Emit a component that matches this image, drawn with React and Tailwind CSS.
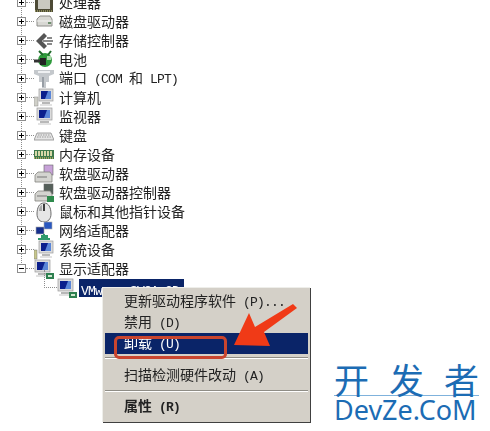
import React from 'react';

const cjk = { fontFamily: '"Noto Sans CJK SC", "Liberation Sans", sans-serif' };

const Cpu = () => (
  <svg viewBox="0 0 20 20" className="w-5 h-5">
    <rect x="1" y="1" width="18" height="18" fill="#4d4a36" />
    <rect x="4" y="3" width="12" height="13" fill="#c9c8c0" />
    <path d="M1 18h18" stroke="#8a8a5a" strokeWidth="2" strokeDasharray="1 1" />
  </svg>
);
const Disk = () => (
  <svg viewBox="0 0 20 20" className="w-5 h-5">
    <path d="M3 7 L6 4 H16 L18 7 V14 H3 Z" fill="#d8d8d4" stroke="#8e8e8a" />
    <path d="M3 9 H18" stroke="#f2f2f0" />
    <rect x="14" y="10" width="3" height="2" fill="#6f8f6f" />
  </svg>
);
const Storage = () => (
  <svg viewBox="0 0 20 20" className="w-5 h-5">
    <path d="M10 2 L2 10 L10 18 L13 15 L8 10 L13 5 Z" fill="#555" />
    <path d="M9 10 H19 M13 7 H18 M13 13 H18" stroke="#8a8a8a" strokeWidth="2" />
  </svg>
);
const Battery = () => (
  <svg viewBox="0 0 20 20" className="w-5 h-5">
    <circle cx="11" cy="10" r="7" fill="#2f9a3c" />
    <path d="M5 1 L9 5 M17 1 L14 5" stroke="#1f6a2a" strokeWidth="2" />
    <path d="M0 11 H7" stroke="#333" strokeWidth="3" />
    <rect x="6" y="8" width="6" height="7" fill="#222" />
    <rect x="13" y="6" width="4" height="4" fill="#a8d8a8" />
  </svg>
);
const Port = () => (
  <svg viewBox="0 0 20 20" className="w-5 h-5">
    <path d="M0 1 H20 V5 L15 7 V13 H12 V19 H8 V13 H5 V7 L0 5 Z" fill="#c4c8cc" />
    <path d="M4 3 H16" stroke="#eef0f2" strokeWidth="2" />
    <path d="M9 8 V18" stroke="#8a9098" strokeWidth="1.5" />
  </svg>
);
const Screen = ({ x = 3, w = 15 }) => (
  <>
    <rect x={x} y="1" width={w} height="12" fill="#dcdcdc" stroke="#9a9a9a" strokeWidth="0.7" />
    <rect x={x + 2} y="3" width={w - 4} height="8" fill="#5a86d8" />
    <path d={`M${x + 2} 3 h${w - 7} l-3 8 h-${w - 10} z`} fill="#0b1f8c" />
    <rect x={x + 3} y="14" width={w - 6} height="2" fill="#b8b8b8" />
    <rect x={x + 1} y="16" width={w - 2} height="2" fill="#e2e2e2" />
  </>
);
const Computer = () => (
  <svg viewBox="0 0 20 20" className="w-5 h-5">
    <Screen x={5} w={14} />
    <rect x="0" y="9" width="4" height="9" fill="#cfcfc8" stroke="#8a8a8a" strokeWidth="0.5" />
  </svg>
);
const Monitor = () => (
  <svg viewBox="0 0 20 20" className="w-5 h-5">
    <Screen />
  </svg>
);
const Keyboard = () => (
  <svg viewBox="0 0 20 20" className="w-5 h-5">
    <path d="M3 7 H17 L20 14 H0 Z" fill="#e4e4e4" stroke="#8c8c8c" strokeWidth="0.8" />
    <path d="M4 9 H16 M3 11 H17" stroke="#9c9c9c" strokeDasharray="1.5 1" />
  </svg>
);
const Memory = () => (
  <svg viewBox="0 0 20 20" className="w-5 h-5">
    <rect x="0" y="5" width="20" height="9" fill="#3f7a4c" />
    <path d="M2 6 V11 M5 6 V11 M8 6 V11 M11 6 V11 M14 6 V11 M17 6 V11" stroke="#d8d8a8" strokeWidth="2" />
    <path d="M0 13 H20" stroke="#c8b46a" strokeWidth="1.5" strokeDasharray="1 1" />
  </svg>
);
const Floppy = ({ controller }) => (
  <svg viewBox="0 0 20 20" className="w-5 h-5">
    <rect x="10" y="1" width="9" height="10" fill={controller ? '#55605a' : '#c7a2d8'} stroke="#666" strokeWidth="0.6" />
    <path d="M1 11 L4 8 H16 L18 11 V18 H1 Z" fill="#d4d4d0" stroke="#84847f" strokeWidth="0.8" />
    <path d="M3 13 H13" stroke="#777" />
    {controller && <rect x="13" y="13" width="7" height="6" fill="#2e8a4c" />}
  </svg>
);
const Mouse = () => (
  <svg viewBox="0 0 20 20" className="w-5 h-5">
    <path d="M10 1 C15 1 17 6 17 12 C17 17 14 20 10 20 C6 20 3 17 3 12 C3 6 5 1 10 1 Z" fill="#e6e6e6" stroke="#6c6c6c" />
    <path d="M10 2 V9" stroke="#3c3c3c" strokeWidth="2" />
    <path d="M5 9 C5 5 7 3 8 3 V9 Z" fill="#a8a8a8" />
  </svg>
);
const Network = () => (
  <svg viewBox="0 0 20 20" className="w-5 h-5">
    <rect x="10" y="1" width="8" height="7" fill="#2a58c0" stroke="#aaa" strokeWidth="0.6" />
    <rect x="2" y="6" width="8" height="7" fill="#16308c" stroke="#aaa" strokeWidth="0.6" />
    <path d="M10 13 V16 M4 18 H16" stroke="#2f9a6c" strokeWidth="2" />
    <rect x="7" y="14" width="7" height="4" fill="#2f9a6c" />
  </svg>
);
const System = () => (
  <svg viewBox="0 0 20 20" className="w-5 h-5">
    <Screen x={5} w={14} />
    <rect x="0" y="10" width="3" height="9" fill="#c7c78a" stroke="#777" strokeWidth="0.5" />
  </svg>
);
const Display = () => (
  <svg viewBox="0 0 20 20" className="w-5 h-5">
    <Screen x={1} w={15} />
    <rect x="12" y="14" width="8" height="6" fill="#2e8050" />
    <rect x="14" y="16" width="4" height="2" fill="#cfe8cf" />
  </svg>
);

const devices = [
  { Icon: Cpu, label: '处理器' },
  { Icon: Disk, label: '磁盘驱动器' },
  { Icon: Storage, label: '存储控制器' },
  { Icon: Battery, label: '电池' },
  { Icon: Port, label: '端口', port: true },
  { Icon: Computer, label: '计算机' },
  { Icon: Monitor, label: '监视器' },
  { Icon: Keyboard, label: '键盘' },
  { Icon: Memory, label: '内存设备' },
  { Icon: () => <Floppy />, label: '软盘驱动器' },
  { Icon: () => <Floppy controller />, label: '软盘驱动器控制器' },
  { Icon: Mouse, label: '鼠标和其他指针设备' },
  { Icon: Network, label: '网络适配器' },
  { Icon: System, label: '系统设备' },
  { Icon: Display, label: '显示适配器', open: true },
];

// texto latino de ancho fijo, 7px por caracter como en el original
const Mono = ({ children }) => (
  <span className="font-['Liberation_Mono'] text-[13px] tracking-[-0.8px] whitespace-pre">{children}</span>
);

const TreeRow = ({ Icon, label, port, open }) => (
  <div className="h-[19px] flex items-center pl-[17px]">
    <div className="relative w-[9px] h-[9px] border border-[#8d8d8d] bg-white shrink-0">
      <div className="absolute left-[1px] top-[3px] w-[5px] h-px bg-black" />
      {!open && <div className="absolute left-[3px] top-[1px] w-px h-[5px] bg-black" />}
    </div>
    <div className="w-[8px] border-t border-dotted border-[#8d8d8d]" />
    <Icon />
    <span className="ml-[5px] text-[14px] leading-[19px] text-[#222] whitespace-nowrap">
      {label}
      {port && (
        <>
          <Mono> (COM </Mono>和<Mono> LPT)</Mono>
        </>
      )}
    </span>
  </div>
);

const MenuItem = ({ children, active, bold }) => (
  <div
    className={`h-[21px] flex items-center pl-[19px] text-[14px] whitespace-nowrap ${
      active ? 'bg-[#0a2468] text-white' : 'text-[#222]'
    } ${bold ? 'font-bold' : ''}`}
  >
    {children}
  </div>
);

export default function App() {
  return (
    <div className="relative w-[490px] h-[431px] overflow-hidden bg-white" style={cjk}>
      <div className="flow-root blur-[0.35px]">
        {/* arbol de dispositivos, la primera fila sale cortada arriba */}
        <div className="relative -mt-[7px]">
          <div className="absolute left-[21px] top-0 h-[276px] border-l border-dotted border-[#8d8d8d]" />
          {devices.map((d) => (
            <TreeRow key={d.label} {...d} />
          ))}
          <div className="relative h-[19px] flex items-center pl-[44px]">
            <div className="absolute left-[44px] -top-[8px] h-[18px] border-l border-dotted border-[#8d8d8d]" />
            <div className="w-[13px] border-t border-dotted border-[#8d8d8d]" />
            <Display />
            <div className="ml-[2px] w-[105px] h-[18px] pl-[2px] bg-[#0a2468] text-white leading-[18px] whitespace-nowrap">
              <Mono>VMware SVGA 3D</Mono>
            </div>
          </div>
        </div>

        {/* menu contextual */}
        <div className="absolute left-[102px] top-[287px] w-[208px] h-[135px] bg-[#d4d0c8] border-t border-l border-t-[#eeeeea] border-l-[#eeeeea] shadow-[1px_1px_0_#404040] pt-[3px] px-[2px]">
          <MenuItem>
            <span>更新驱动程序软件<Mono> (P)...</Mono></span>
          </MenuItem>
          <MenuItem>
            <span>禁用<Mono> (D)</Mono></span>
          </MenuItem>
          <MenuItem active>
            <span>卸载<Mono> (U)</Mono></span>
          </MenuItem>
          <div className="mt-[3px] mb-[6px] border-t border-b border-t-[#8f8d86] border-b-white" />
          <MenuItem>
            <span>扫描检测硬件改动<Mono> (A)</Mono></span>
          </MenuItem>
          <div className="my-[4px] border-t border-b border-t-[#8f8d86] border-b-white" />
          <MenuItem bold>
            <span>属性<Mono> (R)</Mono></span>
          </MenuItem>
        </div>

        {/* marca roja */}
        <div className="absolute left-[114px] top-[336px] w-[113px] h-[23px] border-[3px] border-[#c9452f] rounded-[5px]" />
        <svg className="absolute left-[225px] top-[298px]" width="80" height="56" viewBox="0 0 80 56">
          <path d="M9 47 L24 15 L30 29 L68 6 L72 10 L39 34 L45 48 Z" fill="#f03a17" />
        </svg>
      </div>

      {/* marca de agua */}
      <div className="absolute left-[334px] top-[361px] w-[145px] flex flex-col text-[#1c6cb4]">
        <div className="flex justify-between text-[35px] leading-[35px] h-[35px] border-b border-[#7fb2dc]">
          <span>开</span>
          <span>发</span>
          <span>者</span>
        </div>
        <div className="font-['Noto_Sans'] text-[27px] leading-[27px] whitespace-nowrap">DevZe.CoM</div>
      </div>
    </div>
  );
}
